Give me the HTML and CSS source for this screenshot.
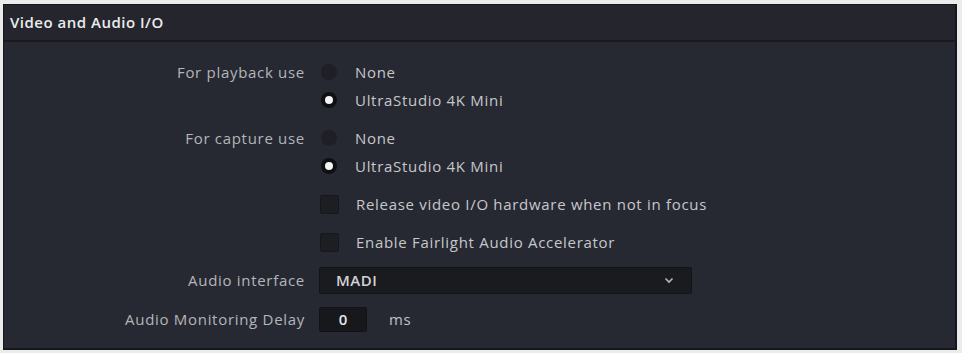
FILE: index.html
```html
<!DOCTYPE html>
<html>
<head>
<meta charset="utf-8">
<link rel="stylesheet" href="styles.css">
</head>
<body>
<div class="panel">
  <div class="header">Video and Audio I/O</div>
  <div class="content">
    <div class="group">
      <div class="row">
        <div class="label">For playback use</div>
        <div class="ctrl"><span class="radio"></span><span class="opt">None</span></div>
      </div>
      <div class="row">
        <div class="label"></div>
        <div class="ctrl"><span class="radio on"></span><span class="opt">UltraStudio 4K Mini</span></div>
      </div>
    </div>
    <div class="group">
      <div class="row">
        <div class="label">For capture use</div>
        <div class="ctrl"><span class="radio"></span><span class="opt">None</span></div>
      </div>
      <div class="row">
        <div class="label"></div>
        <div class="ctrl"><span class="radio on"></span><span class="opt">UltraStudio 4K Mini</span></div>
      </div>
    </div>
    <div class="row">
      <div class="label"></div>
      <div class="ctrl"><span class="check"></span><span class="opt">Release video I/O hardware when not in focus</span></div>
    </div>
    <div class="row">
      <div class="label"></div>
      <div class="ctrl"><span class="check"></span><span class="opt">Enable Fairlight Audio Accelerator</span></div>
    </div>
    <div class="row">
      <div class="label">Audio interface</div>
      <div class="ctrl">
        <div class="select"><span>MADI</span>
          <svg class="chev" width="10" height="7" viewBox="0 0 10 7"><path d="M1.5 1.5 L5 5 L8.5 1.5" fill="none" stroke="#b8b8bc" stroke-width="1.6"/></svg>
        </div>
      </div>
    </div>
    <div class="row last">
      <div class="label">Audio Monitoring Delay</div>
      <div class="ctrl"><div class="num">0</div><span class="unit">ms</span></div>
    </div>
  </div>
</div>
</body>
</html>
```
FILE: styles.css
```css
html, body {
  margin: 0;
  padding: 0;
  background: #ebebeb;
}
body {
  width: 962px;
  height: 353px;
  overflow: hidden;
  font-family: "Open Sans", "Noto Sans", sans-serif;
}
.panel {
  margin: 4px 0 0 3px;
  width: 951px;
  height: 343px;
  background: #272932;
  border: 1px solid #16171b;
  border-right-width: 2px;
  border-bottom-width: 2px;
  display: flex;
  flex-direction: column;
}
.header {
  background: #24252d;
  border-bottom: 2px solid #1a1b20;
  color: #ececec;
  font-size: 15px;
  font-weight: 600;
  letter-spacing: 0.5px;
  padding-left: 6px;
  line-height: 35px;
  box-sizing: border-box;
  height: 37px;
}
.content {
  padding-top: 16px;
  display: flex;
  flex-direction: column;
  gap: 10px;
}
.group {
  display: flex;
  flex-direction: column;
}
.row {
  display: flex;
  align-items: center;
  height: 28px;
}
.row.last {
  margin-top: 1px;
}
.label {
  width: 302px;
  text-align: right;
  color: #b4b5ba;
  font-size: 15px;
  letter-spacing: 0.7px;
  padding-right: 1px;
  box-sizing: border-box;
  flex: none;
}
.ctrl {
  display: flex;
  align-items: center;
}
.opt {
  color: #c6c7cb;
  font-size: 15px;
  letter-spacing: 0.7px;
}
.radio {
  width: 16px;
  height: 16px;
  border-radius: 50%;
  background: #1f2026;
  margin: 0 18px 0 15px;
  box-sizing: border-box;
}
.radio.on {
  background: #f4f4f4;
  border: 4px solid #101013;
}
.check {
  width: 19px;
  height: 19px;
  background: #1d1e22;
  border: 1px solid #17181b;
  border-radius: 2px;
  box-sizing: border-box;
  margin: 0 17px 0 14px;
}
.select {
  margin-left: 13px;
  width: 373px;
  height: 27px;
  background: #1a1b1e;
  border: 1px solid #141416;
  border-radius: 2px;
  box-sizing: border-box;
  display: flex;
  align-items: center;
  justify-content: space-between;
  padding: 0 17px 0 16px;
  color: #d2d2d6;
  font-size: 15px;
  font-weight: 600;
  letter-spacing: 0.5px;
}
.num {
  margin-left: 13px;
  width: 48px;
  height: 25px;
  background: #17181b;
  border: 1px solid #131315;
  border-radius: 2px;
  box-sizing: border-box;
  display: flex;
  align-items: center;
  justify-content: center;
  color: #e4e4e8;
  font-size: 15px;
  font-weight: 600;
}
.unit {
  margin-left: 22px;
  color: #c0c1c5;
  font-size: 15px;
  letter-spacing: 0.7px;
}
```
